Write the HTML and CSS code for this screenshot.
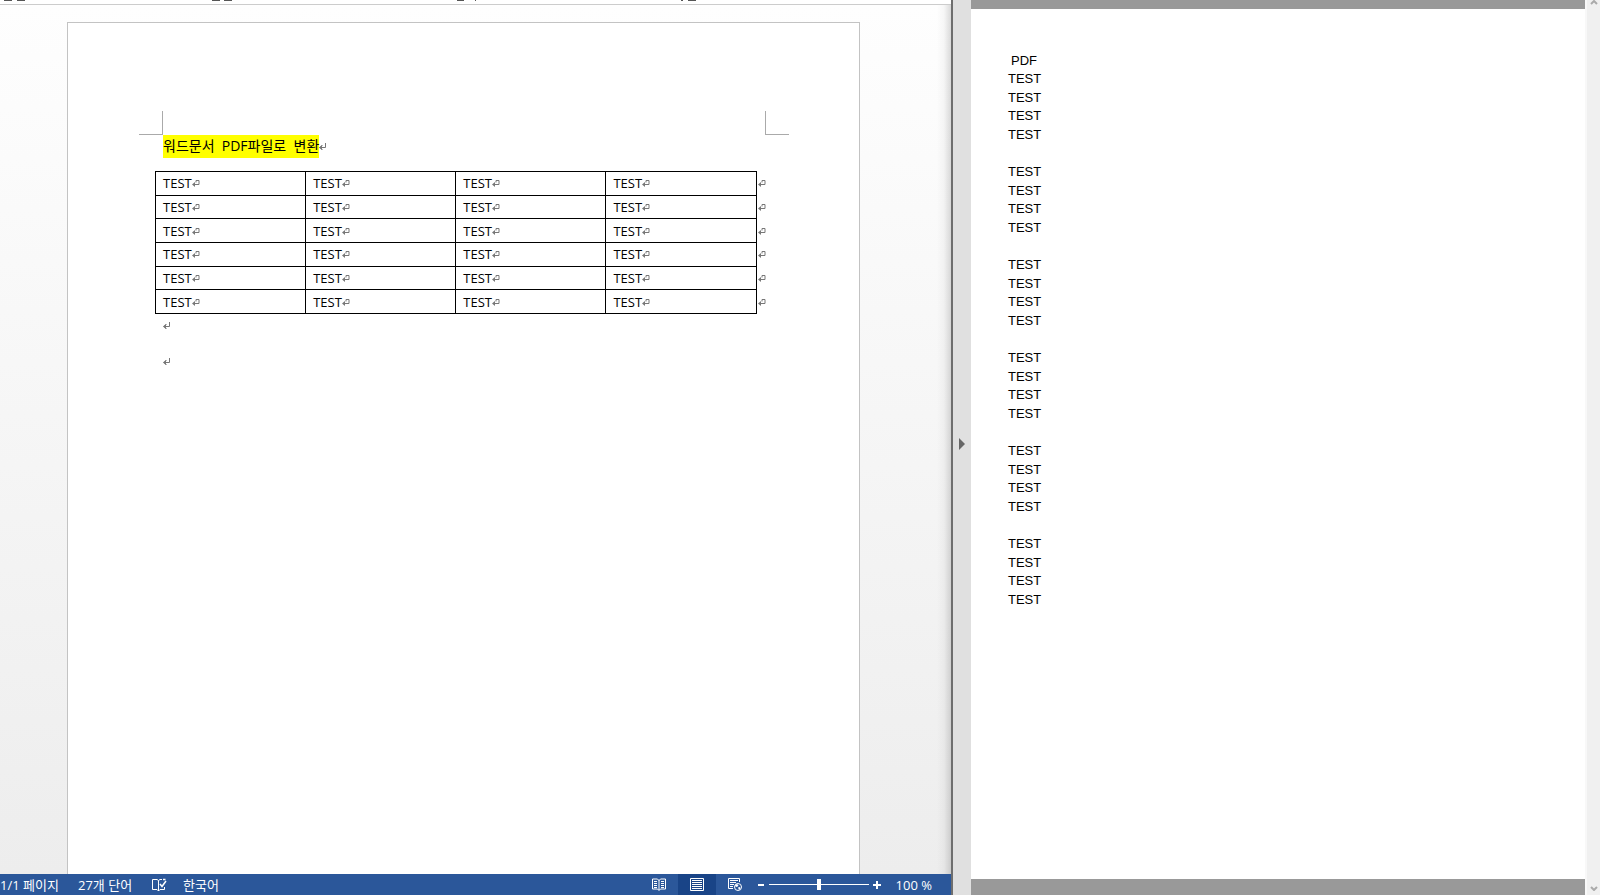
FILE: index.html
```html
<!DOCTYPE html>
<html lang="ko">
<head>
<meta charset="utf-8">
<title>워드문서 PDF파일로 변환</title>
<link rel="stylesheet" href="styles.css">
</head>
<body>
<svg class="defs" aria-hidden="true">
  <symbol id="ret" viewBox="0 0 8 8"><path d="M6.500 0v4.500H1.500M3.500 2L1 4.500L3.500 7" fill="none" stroke="#777"/><path d="M0 4.500L3 2v5z" fill="#777"/></symbol>
  <symbol id="cellret" viewBox="0 0 8 8"><path d="M4 2.500V.5h3v4H2" fill="none" stroke="#777"/><path d="M0 4.500L3 2v5z" fill="#777"/></symbol>
</svg>
<div class="app">
  <section class="word">
    <header class="ribbon">
      <svg width="700" height="1" aria-hidden="true"><path d="M4 .5h8M17 .5h8M212 .5h8M224 .5h8M457 .5h7M475 .5h1M681 .5h2M688 .5h8" stroke="#555"/></svg>
    </header>
    <main class="workspace">
      <article class="page">
        <div class="crops"><span class="crop crop-left"></span><span class="crop crop-right"></span></div>
        <div class="text">
          <p class="title"><mark>워드문서  PDF파일로  변환</mark><svg class="m"><use href="#ret"/></svg></p>
          <table class="grid">
            <colgroup><col><col><col><col><col class="end-col"></colgroup>
            <tbody>
            <tr><td>TEST<svg class="m"><use href="#cellret"/></svg></td><td>TEST<svg class="m"><use href="#cellret"/></svg></td><td>TEST<svg class="m"><use href="#cellret"/></svg></td><td>TEST<svg class="m"><use href="#cellret"/></svg></td><td class="end"><svg class="m"><use href="#cellret"/></svg></td></tr>
            <tr><td>TEST<svg class="m"><use href="#cellret"/></svg></td><td>TEST<svg class="m"><use href="#cellret"/></svg></td><td>TEST<svg class="m"><use href="#cellret"/></svg></td><td>TEST<svg class="m"><use href="#cellret"/></svg></td><td class="end"><svg class="m"><use href="#cellret"/></svg></td></tr>
            <tr><td>TEST<svg class="m"><use href="#cellret"/></svg></td><td>TEST<svg class="m"><use href="#cellret"/></svg></td><td>TEST<svg class="m"><use href="#cellret"/></svg></td><td>TEST<svg class="m"><use href="#cellret"/></svg></td><td class="end"><svg class="m"><use href="#cellret"/></svg></td></tr>
            <tr><td>TEST<svg class="m"><use href="#cellret"/></svg></td><td>TEST<svg class="m"><use href="#cellret"/></svg></td><td>TEST<svg class="m"><use href="#cellret"/></svg></td><td>TEST<svg class="m"><use href="#cellret"/></svg></td><td class="end"><svg class="m"><use href="#cellret"/></svg></td></tr>
            <tr><td>TEST<svg class="m"><use href="#cellret"/></svg></td><td>TEST<svg class="m"><use href="#cellret"/></svg></td><td>TEST<svg class="m"><use href="#cellret"/></svg></td><td>TEST<svg class="m"><use href="#cellret"/></svg></td><td class="end"><svg class="m"><use href="#cellret"/></svg></td></tr>
            <tr><td>TEST<svg class="m"><use href="#cellret"/></svg></td><td>TEST<svg class="m"><use href="#cellret"/></svg></td><td>TEST<svg class="m"><use href="#cellret"/></svg></td><td>TEST<svg class="m"><use href="#cellret"/></svg></td><td class="end"><svg class="m"><use href="#cellret"/></svg></td></tr>
            </tbody>
          </table>
          <p class="blank"><svg class="m"><use href="#ret"/></svg></p>
          <p class="blank"><svg class="m"><use href="#ret"/></svg></p>
        </div>
      </article>
    </main>
    <footer class="status">
      <span class="pages">1/1 페이지</span>
      <span class="words">27개 단어</span>
      <button class="proof" aria-label="맞춤법 검사"><svg width="15" height="14" viewBox="0 0 15 14" fill="none" stroke="#fff"><path d="M6.500 13V2.500L5 1.500H.5v10H5l1.500 1.500L8 11.500h4.500V9M6.500 2.500L8 1.500h2"/><path d="M8 6l2 2.500L14 3M11 1.500h2.500" stroke-width="1.500"/></svg></button>
      <span class="lang">한국어</span>
      <div class="tools">
        <button class="view" aria-label="읽기 모드"><svg width="14" height="13" viewBox="0 0 14 13" fill="none" stroke="#fff"><path d="M7 2.500L5.500 1H.5v10h5L7 12.500L8.500 11h5V1h-5zM7 2v10M2 3.500h3M2 5.500h3M2 7.500h3M2 9.500h3M9 3.500h3M9 5.500h3M9 7.500h3M9 9.500h3"/></svg></button>
        <button class="view active" aria-label="인쇄 모양"><svg width="14" height="13" viewBox="0 0 14 13" fill="none" stroke="#fff"><path d="M.5.5h13v12H.5zM2 2.500h10M2 4.500h10M2 6.500h10M2 8.500h10M2 10.500h10"/></svg></button>
        <button class="view" aria-label="웹 모양"><svg width="14" height="13" viewBox="0 0 14 13" fill="none" stroke="#fff"><path d="M5 10.500H.5V.5h11V4M2 2.500h8M2 4.500h6M2 6.500h4M2 8.500h3"/><circle cx="10" cy="9" r="3.500"/><path d="M7 7l2-1 1.500 1.500L9 9 7.500 8.500zM10 9.500l2-.5.5 1.500-1.500 1.500z" fill="#fff" stroke="none"/></svg></button>
        <button class="step" aria-label="축소"><svg width="8" height="8"><path d="M1 4h6" stroke="#fff" stroke-width="2"/></svg></button>
        <input class="zoom" type="range" min="0" max="100" value="50" aria-label="확대/축소">
        <button class="step" aria-label="확대"><svg width="8" height="8"><path d="M0 4h8M4 0v8" stroke="#fff" stroke-width="2"/></svg></button>
        <span class="percent">100 %</span>
      </div>
    </footer>
  </section>
  <section class="pdf">
    <button class="handle" aria-label="탐색 창 열기"><svg width="6" height="12"><path d="M0 0l6 6-6 6z" fill="#666"/></svg></button>
    <div class="sheet">
      <div class="column">
        <div class="head">PDF</div>
        <div class="group"><span>TEST</span><span>TEST</span><span>TEST</span><span>TEST</span></div>
        <div class="group"><span>TEST</span><span>TEST</span><span>TEST</span><span>TEST</span></div>
        <div class="group"><span>TEST</span><span>TEST</span><span>TEST</span><span>TEST</span></div>
        <div class="group"><span>TEST</span><span>TEST</span><span>TEST</span><span>TEST</span></div>
        <div class="group"><span>TEST</span><span>TEST</span><span>TEST</span><span>TEST</span></div>
        <div class="group"><span>TEST</span><span>TEST</span><span>TEST</span><span>TEST</span></div>
      </div>
    </div>
    <div class="scroll">
      <svg width="8" height="5"><path d="M1 4l3-3 3 3" fill="none" stroke="#aaa" stroke-width="2"/></svg>
      <svg width="8" height="5"><path d="M1 1l3 3 3-3" fill="none" stroke="#aaa" stroke-width="2"/></svg>
    </div>
  </section>
</div>
</body>
</html>
```
FILE: styles.css
```css
* { box-sizing: border-box; }
body { margin: 0; background: #fff; color: #000; }
.defs { display: none; }
p { margin: 0; }
button { margin: 0; padding: 0; border: 0; background: none; display: flex; align-items: center; justify-content: center; }
.app { display: grid; grid-template-columns: 951fr 649fr; height: 100vh; overflow: hidden; }

.word { display: flex; flex-direction: column; min-width: 0; font-family: "Open Sans", "Noto Sans CJK KR", sans-serif; }
.ribbon { height: 5px; border-bottom: 1px solid #ccc; background: #fff; overflow: hidden; }
.ribbon svg { display: block; }
.workspace {
  flex: 1; min-height: 0; display: flex; padding: 17px 91px 0 67px;
  background: linear-gradient(to right, transparent calc(100% - 14px), rgba(0, 0, 0, .03) calc(100% - 7px), rgba(0, 0, 0, .14)), linear-gradient(#fefefe, #ededed);
}
.page { flex: 1; background: #fff; border: 1px solid #c3c3c3; border-bottom: 0; padding: 88px 70px 0 71px; }
.crops { display: flex; justify-content: space-between; }
.crop { width: 24px; height: 24px; border-bottom: 1px solid #aaa; }
.crop-left { border-right: 1px solid #aaa; }
.crop-right { border-left: 1px solid #aaa; }
.text { padding: 0 24px; font-size: 13px; }
.m { width: 8px; height: 8px; display: inline-block; }
.title { display: flex; align-items: center; font-size: 14px; line-height: 21px; white-space: pre; }
.title mark { padding-bottom: 2px; background: #ff0; color: #000; }
.grid { width: calc(100% + 10px); height: 143px; margin: 13px 0 0 -8px; border-collapse: collapse; table-layout: fixed; }
.end-col { width: 11px; }
.grid td { border: 1px solid #000; padding: 0 0 0 7px; line-height: 20px; }
.grid td.end { border-width: 0 0 0 1px; padding: 0 0 0 1px; }
.blank { height: 36px; padding-top: 8px; line-height: 8px; }
.blank .m { display: block; }

.status { display: flex; align-items: center; height: 21px; background: #2b579a; color: #fff; font-size: 13px; line-height: 23px; white-space: nowrap; }
.status > span, .percent { height: 21px; }
.pages { width: 78px; }
.words { width: 74px; }
.proof { width: 15px; margin-right: 16px; }
.tools { display: flex; align-items: center; margin-left: auto; padding-right: 19px; }
.view { width: 38px; height: 21px; }
.view.active { background: #194487; }
.step { width: 8px; height: 21px; }
.view + .step { margin-left: 3px; }
.zoom { appearance: none; width: 100px; height: 11px; margin: 0 4px; background: linear-gradient(#fff, #fff) center / 100% 1px no-repeat; }
.zoom::-webkit-slider-thumb { appearance: none; width: 4px; height: 11px; background: #fff; }
.percent { margin-left: 15px; }

.pdf { display: grid; grid-template-columns: 20px 1fr 15px; min-width: 0; }
.handle { background: #e0e0e0; border-left: 2px solid #6e6e6e; padding-bottom: 8px; }
.sheet { border-top: 9px solid #999; border-bottom: 16px solid #999; background: #fff; padding: 43px 37px 0; }
.column { width: 32px; font-family: "Liberation Sans", sans-serif; font-size: 13px; line-height: 18px; text-align: center; }
.group { display: grid; grid-template-rows: repeat(5, 1fr); height: 93px; }
.scroll { display: flex; flex-direction: column; justify-content: space-between; align-items: center; padding-bottom: 4px; background: #f0f0f0; border-left: 2px solid #f8f8f8; }
```
